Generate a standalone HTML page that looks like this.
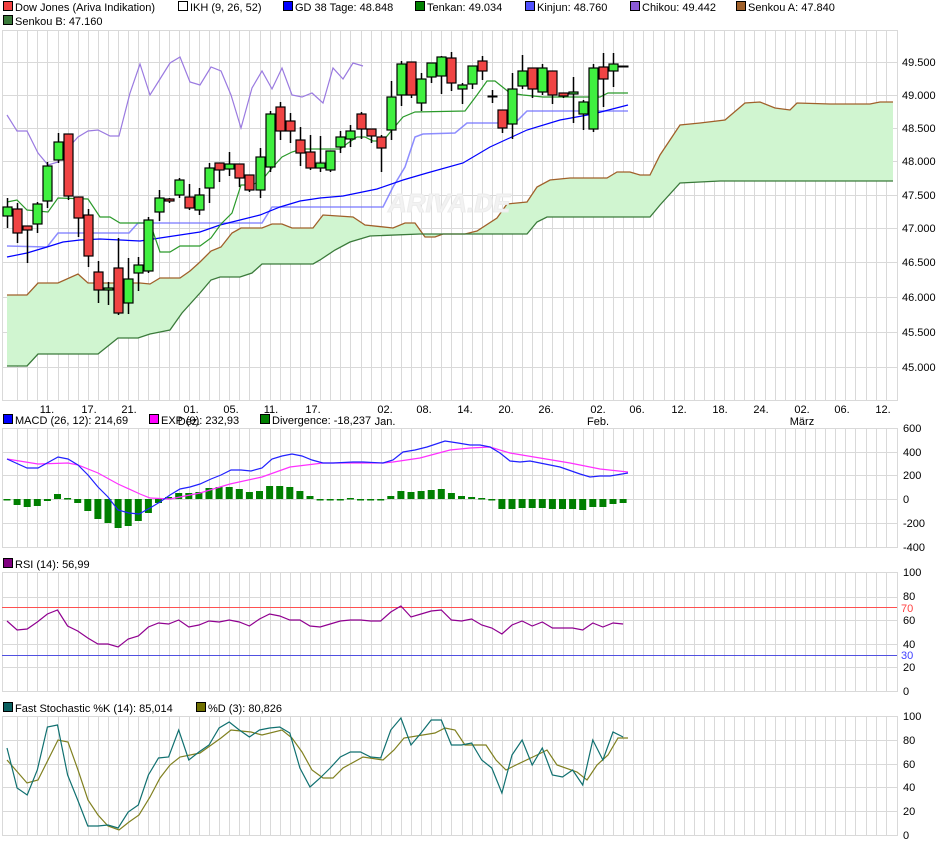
<!DOCTYPE html>
<html><head><meta charset="utf-8"><style>
body{margin:0;background:#fff;width:940px;height:845px;overflow:hidden}
svg{display:block;font-family:"Liberation Sans",sans-serif;font-size:11px}
</style></head><body>
<svg id="s" width="940" height="845" xmlns="http://www.w3.org/2000/svg">
<g id="grid" stroke="#d9d9d9" stroke-width="1" fill="none"></g>
<g id="cloud"></g>
<text x="388" y="212" font-size="26" font-style="italic" font-weight="bold" fill="#f2f2f2" stroke="#ececec">ARIVA.DE</text>
<g id="lines" fill="none"></g>
<g id="candles"></g>
<g id="ind"></g>
<g fill="#000">
<rect x="3.5" y="1.5" width="9" height="9" fill="#f04040" stroke="#000"/><text x="15" y="11">Dow Jones (Ariva Indikation)</text>
<rect x="178.5" y="1.5" width="9" height="9" fill="#fff" stroke="#000"/><text x="190" y="11">IKH (9, 26, 52)</text>
<rect x="283.5" y="1.5" width="9" height="9" fill="#0000ff" stroke="#000"/><text x="295" y="11">GD 38 Tage: 48.848</text>
<rect x="415.5" y="1.5" width="9" height="9" fill="#008000" stroke="#000"/><text x="427" y="11">Tenkan: 49.034</text>
<rect x="525.5" y="1.5" width="9" height="9" fill="#5050ff" stroke="#000"/><text x="537" y="11">Kinjun: 48.760</text>
<rect x="630.5" y="1.5" width="9" height="9" fill="#8a5ad8" stroke="#000"/><text x="642" y="11">Chikou: 49.442</text>
<rect x="736.5" y="1.5" width="9" height="9" fill="#a0602a" stroke="#000"/><text x="748" y="11">Senkou A: 47.840</text>
<rect x="3.5" y="15.5" width="9" height="9" fill="#3a7a3a" stroke="#000"/><text x="15" y="25">Senkou B: 47.160</text>
<rect x="3.5" y="414.5" width="9" height="9" fill="#0000ff" stroke="#000"/><text x="15" y="424">MACD (26, 12): 214,69</text>
<rect x="149.5" y="414.5" width="9" height="9" fill="#ff00ff" stroke="#000"/><text x="161" y="424">EXP (9): 232,93</text>
<rect x="260.5" y="414.5" width="9" height="9" fill="#007f00" stroke="#000"/><text x="272" y="424">Divergence: -18,237</text>
<rect x="3.5" y="558.5" width="9" height="9" fill="#800080" stroke="#000"/><text x="15" y="568">RSI (14): 56,99</text>
<rect x="3.5" y="702.5" width="9" height="9" fill="#0a6060" stroke="#000"/><text x="15" y="712">Fast Stochastic %K (14): 85,014</text>
<rect x="196.5" y="702.5" width="9" height="9" fill="#707000" stroke="#000"/><text x="208" y="712">%D (3): 80,826</text>
</g>
<g fill="#000" text-anchor="middle">
<text x="47" y="413">11.</text><text x="89" y="413">17.</text><text x="129" y="413">21.</text>
<text x="191" y="413">01.</text><text x="189" y="425">Dez.</text>
<text x="231" y="413">05.</text><text x="271" y="413">11.</text><text x="313" y="413">17.</text>
<text x="385" y="413">02.</text><text x="385" y="425">Jan.</text>
<text x="424" y="413">08.</text><text x="465" y="413">14.</text><text x="506" y="413">20.</text><text x="546" y="413">26.</text>
<text x="598" y="413">02.</text><text x="598" y="425">Feb.</text>
<text x="637" y="413">06.</text><text x="679" y="413">12.</text><text x="720" y="413">18.</text><text x="761" y="413">24.</text>
<text x="802" y="413">02.</text><text x="802" y="425">März</text>
<text x="842" y="413">06.</text><text x="883" y="413">12.</text>
</g>
<g fill="#000">
<text x="902" y="66">49.500</text><text x="902" y="99">49.000</text><text x="902" y="132">48.500</text><text x="902" y="165">48.000</text><text x="902" y="199">47.500</text><text x="902" y="232">47.000</text><text x="902" y="266">46.500</text><text x="902" y="301">46.000</text><text x="902" y="336">45.500</text><text x="902" y="371">45.000</text>
<text x="903" y="432">600</text><text x="903" y="456">400</text><text x="903" y="479">200</text><text x="903" y="503">0</text><text x="903" y="527">-200</text><text x="903" y="551">-400</text>
<text x="903" y="576">100</text><text x="903" y="600">80</text><text x="903" y="624">60</text><text x="903" y="648">40</text><text x="903" y="671">20</text><text x="903" y="695">0</text>
<text x="903" y="720">100</text><text x="903" y="744">80</text><text x="903" y="768">60</text><text x="903" y="791">40</text><text x="903" y="815">20</text><text x="903" y="839">0</text>
<text x="901" y="612" fill="#ff4040">70</text><text x="901" y="659" fill="#4040ff">30</text>
</g>
</svg>
<script>
const NS="http://www.w3.org/2000/svg";
function el(p,t,a){const e=document.createElementNS(NS,t);for(const k in a)e.setAttribute(k,a[k]);document.getElementById(p).appendChild(e);return e;}
const X=i=>7+10.1*i;
const panels=[[30,400,[62,95,128,161,195,228,262,297,332,367]],[428,547,[452,475,499,523]],[572,691,[597,620,644,667]],[716,835,[740,764,787,811]]];
for(const [t,b,hs] of panels){
 el("grid","rect",{x:2.5,y:t+.5,width:895,height:b-t});
 for(let i=1;i<88;i++){const x=Math.round(X(i))+.5;if(x<897)el("grid","line",{x1:x,y1:t,x2:x,y2:b});}
 for(const h of hs)el("grid","line",{x1:2,y1:h+.5,x2:897,y2:h+.5});
}
const P=a=>a.map(p=>p.join(",")).join(" ");
const A=[[7,295],[27,295],[38,283],[58,283],[78,274],[88,283],[140,283],[150,284],[160,278],[180,278],[190,271],[200,262],[211,251],[221,247],[232,233],[241,228],[262,228],[272,224],[282,224],[292,228],[313,228],[323,215],[353,217],[365,225],[393,228],[405,223],[415,223],[425,237],[435,237],[443,234],[465,234],[477,231],[497,218],[507,204],[527,202],[537,187],[550,180],[570,178],[607,178],[617,172],[630,172],[640,175],[650,175],[660,155],[680,125],[700,123],[725,120],[745,103],[760,102],[775,108],[790,110],[797,103],[830,104],[870,104],[880,102],[893,102]];
const B=[[7,366],[27,366],[38,354],[98,354],[118,338],[138,338],[150,334],[170,330],[182,313],[200,293],[211,280],[220,277],[240,277],[252,273],[262,264],[313,264],[320,260],[335,250],[350,242],[370,236],[420,234],[527,234],[537,222],[547,217],[650,217],[660,205],[680,183],[700,182],[720,181],[893,181]];
el("cloud","polygon",{points:P(A.concat(B.slice().reverse())),fill:"#d0f5d0"});
el("cloud","polyline",{points:P(A),fill:"none",stroke:"#a0602a","stroke-width":1.3});
el("cloud","polyline",{points:P(B),fill:"none",stroke:"#3a7a3a","stroke-width":1.3});
const chik=[[7,115],[17,131],[27,131],[38,153],[48,165],[58,162],[68,148],[78,137],[88,131],[98,130],[110,136],[119,136],[130,93],[140,64],[150,95],[160,79],[170,63],[180,57],[190,82],[200,85],[211,67],[221,71],[231,95],[241,128],[252,88],[262,71],[272,89],[282,68],[292,95],[302,97],[312,93],[323,103],[333,68],[343,79],[353,63],[363,66]];
el("lines","polyline",{points:P(chik),stroke:"#9a7ae0","stroke-width":1.2});
const kij=[[7,246],[47,247],[58,233],[129,233],[138,223],[262,223],[272,207],[383,207],[393,187],[405,167],[415,137],[423,134],[455,133],[467,123],[497,123],[517,121],[527,111],[628,111]];
el("lines","polyline",{points:P(kij),stroke:"#7070ff","stroke-width":1.5,"stroke-opacity":.8});
const gd=[[7,257],[27,253],[47,247],[63,242],[80,240],[100,239],[140,241],[160,238],[200,232],[220,225],[240,220],[260,215],[280,207],[300,201],[320,198],[343,196],[377,189],[403,180],[427,173],[463,163],[490,147],[527,130],[560,120],[593,114],[628,105]];
el("lines","polyline",{points:P(gd),stroke:"#0000ff","stroke-width":1.2});
const ten=[[7,202],[17,200],[27,210],[48,212],[58,198],[88,199],[100,217],[110,217],[120,223],[150,223],[160,252],[170,252],[180,246],[200,246],[211,238],[221,224],[232,213],[241,185],[252,185],[262,180],[272,168],[282,157],[292,152],[302,149],[340,149],[348,143],[357,137],[365,137],[373,141],[383,141],[392,130],[403,117],[415,112],[465,111],[477,95],[487,81],[495,81],[510,93],[523,95],[543,97],[587,97],[600,97],[608,93],[628,93]];
el("lines","polyline",{points:P(ten),stroke:"#2a9a2a","stroke-width":1.2});
const C=[[207,216,198,228,0],[209,233,203,243,1],[226,230,226,263,1],[204,224,202,233,0],[166,201,162,208,0],[142,160,133,163,0],[134,196,134,200,1],[197,218,197,237,1],[215,256,209,267,1],[272,290,261,303,1],[288,290,282,305,0],[268,313,238,315,1],[279,303,258,314,0],[265,273,257,291,0],[220,271,217,273,0],[198,212,190,221,0],[199,201,198,203,1],[180,195,178,198,0],[197,208,184,210,1],[195,210,188,215,0],[168,188,163,203,0],[163,170,163,182,1],[164,169,152,176,0],[164,178,164,187,1],[175,190,175,192,1],[157,190,148,198,0],[114,167,111,172,0],[107,131,102,140,1],[121,131,113,143,1],[140,153,127,166,1],[152,168,135,170,1],[163,168,136,172,0],[151,170,151,172,0],[137,147,131,153,0],[131,139,125,147,0],[114,129,112,139,1],[129,136,129,143,1],[137,148,135,172,1],[97,130,81,140,0],[64,95,61,106,0],[62,95,62,98,1],[79,103,73,111,0],[63,77,63,83,0],[57,76,56,94,0],[58,83,52,91,1],[85,89,83,104,0],[66,84,66,89,0],[61,71,56,80,1],[96,96,90,103,2],[110,128,110,133,1],[89,124,73,139,0],[71,86,55,89,0],[68,89,68,98,1],[68,92,64,95,0],[71,95,71,104,1],[93,96,93,98,1],[92,94,77,123,0],[102,114,100,130,0],[68,129,64,132,0],[67,79,53,107,1],[64,71,53,87,0],[66,66,66,66,2]];
C.forEach((c,i)=>{const x=Math.round(X(i))+.5;
 el("candles","line",{x1:x,y1:c[2],x2:x,y2:c[3],stroke:"#000","stroke-width":1.5});
 if(c[4]==2){el("candles","line",{x1:x-5,y1:c[0]+.5,x2:x+5,y2:c[0]+.5,stroke:"#000","stroke-width":2});}
 else el("candles","rect",{x:x-4.5,y:c[0],width:9,height:Math.max(c[1]-c[0],2),fill:c[4]?"#f04444":"#40f040",stroke:"#000","stroke-width":1.2});
});
const div=[499,505,507,506,501,494,498,503,511,519,523,528,526,521,513,503,497,493,493,492,488,487,487,489,492,491,486,486,487,491,496,499,500,499,498,499,500,500,496,491,492,491,490,489,493,496,497,498,500,509,509,508,508,508,509,509,509,510,507,507,504,503];
div.forEach((v,i)=>{const x=X(i);const t=Math.min(v,499),h=Math.max(Math.abs(v-499),1.5);el("ind","rect",{x:x-3.5,y:t,width:7,height:h,fill:"#007f00"});});
const macd=[[7,459],[27,468],[38,468],[58,457],[68,459],[78,465],[88,475],[98,487],[108,497],[118,510],[129,513],[139,514],[150,508],[160,502],[170,495],[180,489],[190,487],[200,484],[211,479],[221,475],[231,470],[241,470],[251,471],[262,468],[272,459],[282,456],[292,454],[302,456],[312,460],[323,463],[333,463],[353,462],[363,462],[383,463],[393,460],[403,452],[415,450],[427,447],[445,441],[458,443],[470,445],[480,445],[490,447],[500,453],[510,461],[520,462],[530,461],[540,463],[560,467],[580,474],[590,477],[600,476],[610,476],[628,473]];
const ex=[[7,459],[38,464],[68,463],[78,465],[98,473],[118,484],[140,494],[150,498],[170,499],[200,493],[230,484],[262,477],[290,467],[323,463],[383,463],[393,462],[420,458],[450,450],[470,448],[490,447],[510,453],[540,458],[570,463],[600,469],[628,472]];
el("ind","polyline",{points:P(ex),fill:"none",stroke:"#ff30ff","stroke-width":1.2});
el("ind","polyline",{points:P(macd),fill:"none",stroke:"#2020ff","stroke-width":1.2});
el("ind","line",{x1:2,y1:607.5,x2:897,y2:607.5,stroke:"#ff5050"});
el("ind","line",{x1:2,y1:655.5,x2:897,y2:655.5,stroke:"#5050e0"});
const rsi=[621,630,629,622,614,610,626,631,638,644,644,647,639,636,627,623,624,620,627,625,621,622,620,622,626,619,614,616,620,620,626,627,624,621,620,620,621,621,612,606,617,614,611,610,620,621,619,625,628,634,625,621,626,622,628,628,628,630,623,627,623,624];
el("ind","polyline",{points:P(rsi.map((y,i)=>[X(i),y])),fill:"none",stroke:"#900090","stroke-width":1.2});
const K=[748,788,795,770,727,725,775,800,826,826,825,828,812,805,775,758,757,730,760,752,745,728,722,730,737,730,728,727,733,768,787,778,768,757,752,752,757,758,730,718,745,733,720,720,745,745,743,760,768,793,755,740,765,748,775,777,770,785,740,760,732,737];
const D=[[7,760],[27,783],[38,780],[58,740],[68,742],[78,770],[88,800],[98,815],[108,826],[119,830],[129,822],[139,815],[150,797],[160,778],[170,765],[180,757],[200,753],[221,738],[231,730],[251,732],[262,735],[282,730],[292,738],[302,752],[312,770],[323,778],[333,778],[343,768],[363,757],[383,760],[394,750],[404,738],[435,733],[445,728],[455,730],[465,745],[486,745],[496,760],[506,770],[516,765],[537,755],[547,750],[557,765],[577,772],[587,780],[597,765],[608,755],[618,738],[628,738]];
el("ind","polyline",{points:P(D),fill:"none",stroke:"#808020","stroke-width":1.2});
el("ind","polyline",{points:P(K.map((y,i)=>[X(i),y])),fill:"none",stroke:"#107070","stroke-width":1.2});
</script>
</body></html>
